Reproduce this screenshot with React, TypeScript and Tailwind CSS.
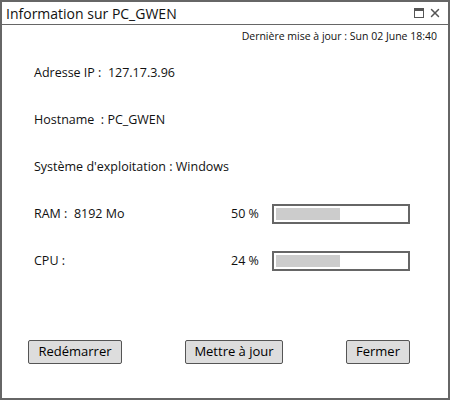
import { X } from 'lucide-react'

function Row({ text }: { text: string }) {
  return <div className="flex h-[47px] items-center whitespace-pre">{text}</div>
}

function UsageRow({ label, percent }: { label: string; percent: number }) {
  return (
    <div className="flex h-[47px] items-center whitespace-pre">
      <span className="w-[197px]">{label}</span>
      <span className="w-[41px]">{percent} %</span>
      <div className="h-[20px] w-[138px] border-2 border-[#666] p-[2px]">
        <div className="h-full w-[64px] bg-[#ccc]" />
      </div>
    </div>
  )
}

function Btn({ children, width }: { children: string; width: string }) {
  return (
    <button className={`h-[24px] ${width} rounded-[2px] border border-[#555] bg-[#ddd] text-[13px] text-black`}>
      {children}
    </button>
  )
}

export default function App() {
  return (
    <div
      className="flex h-[400px] w-[450px] flex-col border-2 border-[#666] bg-white text-[#111]"
      style={{ fontFamily: '"Open Sans", "Liberation Sans", sans-serif' }}
    >
      <div className="flex h-[23px] items-center justify-between border-b border-[#666] pl-[4px] pr-[6px]">
        <span className="text-[14px]">Information sur PC_GWEN</span>
        <div className="flex items-center gap-[4px] text-[#555]">
          <div className="h-[10px] w-[10px] border border-[#555] border-t-[3px]" />
          <X size={14} strokeWidth={2.5} />
        </div>
      </div>

      <div className="flex justify-end pr-[11px] pt-[4px] text-[10.5px]">
        Dernière mise à jour : Sun 02 June 18:40
      </div>

      <div className="mt-[5px] flex flex-col pl-[32px] text-[12.5px]">
        <Row text="Adresse IP :  127.17.3.96" />
        <Row text="Hostname  : PC_GWEN" />
        <Row text="Système d'exploitation : Windows" />
        <UsageRow label="RAM :  8192 Mo" percent={50} />
        <UsageRow label="CPU :" percent={24} />
      </div>

      <div className="mt-[55px] flex justify-between pl-[26px] pr-[38px]">
        <Btn width="w-[94px]">Redémarrer</Btn>
        <Btn width="w-[98px]">Mettre à jour</Btn>
        <Btn width="w-[64px]">Fermer</Btn>
      </div>
    </div>
  )
}
